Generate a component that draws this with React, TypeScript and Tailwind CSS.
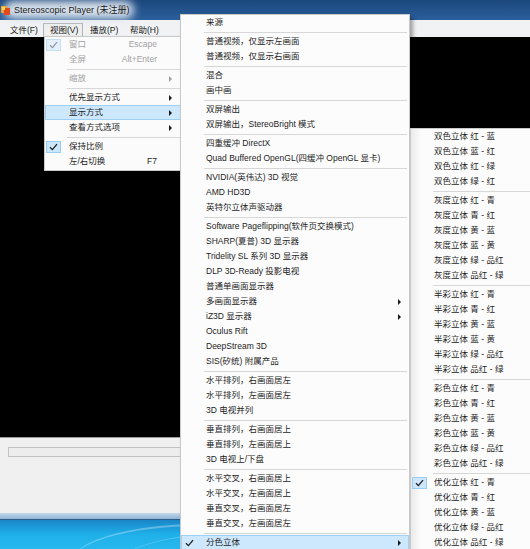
import React from 'react';

type Item = { t: string; k?: string; sub?: boolean; chk?: boolean; dis?: boolean; act?: boolean } | null;

const menu1: Item[] = [
  { t: '窗口', k: 'Escape', chk: true, dis: true },
  { t: '全屏', k: 'Alt+Enter', dis: true },
  null,
  { t: '缩放', sub: true, dis: true },
  null,
  { t: '优先显示方式', sub: true },
  { t: '显示方式', sub: true, act: true },
  { t: '查看方式选项', sub: true },
  null,
  { t: '保持比例', chk: true },
  { t: '左/右切换', k: 'F7' },
];

const menu2: Item[] = [
  { t: '来源' },
  null,
  { t: '普通视频，仅显示左画面' },
  { t: '普通视频，仅显示右画面' },
  null,
  { t: '混合' },
  { t: '画中画' },
  null,
  { t: '双屏输出' },
  { t: '双屏输出，StereoBright 模式' },
  null,
  { t: '四重缓冲 DirectX' },
  { t: 'Quad Buffered OpenGL(四缓冲 OpenGL 显卡)' },
  null,
  { t: 'NVIDIA(英伟达) 3D 视觉' },
  { t: 'AMD HD3D' },
  { t: '英特尔立体声驱动器' },
  null,
  { t: 'Software Pageflipping(软件页交换模式)' },
  { t: 'SHARP(夏普) 3D 显示器' },
  { t: 'Tridelity SL 系列 3D 显示器' },
  { t: 'DLP 3D-Ready 投影电视' },
  { t: '普通单画面显示器' },
  { t: '多画面显示器', sub: true },
  { t: 'iZ3D 显示器', sub: true },
  { t: 'Oculus Rift' },
  { t: 'DeepStream 3D' },
  { t: 'SIS(矽统) 附属产品' },
  null,
  { t: '水平排列，右画面居左' },
  { t: '水平排列，左画面居左' },
  { t: '3D 电视并列' },
  null,
  { t: '垂直排列，右画面居上' },
  { t: '垂直排列，左画面居上' },
  { t: '3D 电视上/下盘' },
  null,
  { t: '水平交叉，右画面居上' },
  { t: '水平交叉，左画面居上' },
  { t: '垂直交叉，右画面居左' },
  { t: '垂直交叉，左画面居左' },
  null,
  { t: '分色立体', sub: true, chk: true, act: true },
];

const menu3: Item[] = [
  { t: '双色立体 红 - 蓝' },
  { t: '双色立体 蓝 - 红' },
  { t: '双色立体 红 - 绿' },
  { t: '双色立体 绿 - 红' },
  null,
  { t: '灰度立体 红 - 青' },
  { t: '灰度立体 青 - 红' },
  { t: '灰度立体 黄 - 蓝' },
  { t: '灰度立体 蓝 - 黄' },
  { t: '灰度立体 绿 - 品红' },
  { t: '灰度立体 品红 - 绿' },
  null,
  { t: '半彩立体 红 - 青' },
  { t: '半彩立体 青 - 红' },
  { t: '半彩立体 黄 - 蓝' },
  { t: '半彩立体 蓝 - 黄' },
  { t: '半彩立体 绿 - 品红' },
  { t: '半彩立体 品红 - 绿' },
  null,
  { t: '彩色立体 红 - 青' },
  { t: '彩色立体 青 - 红' },
  { t: '彩色立体 黄 - 蓝' },
  { t: '彩色立体 蓝 - 黄' },
  { t: '彩色立体 绿 - 品红' },
  { t: '彩色立体 品红 - 绿' },
  null,
  { t: '优化立体 红 - 青', chk: true },
  { t: '优化立体 青 - 红' },
  { t: '优化立体 黄 - 蓝' },
  { t: '优化立体 绿 - 品红' },
  { t: '优化立体 品红 - 绿' },
];

const Check = ({ dis }: { dis?: boolean }) => (
  <svg width="9" height="8" viewBox="0 0 9 8">
    <path d="M1 4.3 L3.4 6.6 L8 1.2" fill="none" stroke={dis ? '#8d9aa6' : '#1f1f1f'} strokeWidth="1.3" />
  </svg>
);

const Arrow = ({ dis }: { dis?: boolean }) => (
  <svg width="3" height="6" viewBox="0 0 3 6">
    <path d="M0 0 L3 3 L0 6Z" fill={dis ? '#a0a0a0' : '#1a1a1a'} />
  </svg>
);

function MenuRow({ it, v }: { it: Item; v: 1 | 2 | 3 }) {
  if (!it) {
    return (
      <div className={`flex h-[4px] items-center pr-[2px] ${v === 2 ? 'pl-[23px]' : 'pl-[22px]'}`}>
        <div className="h-px flex-1 bg-[#d7d7d7]" />
      </div>
    );
  }
  const pl = v === 1 ? 'pl-[24px]' : v === 2 ? 'pl-[25px]' : 'pl-[23px]';
  return (
    <div
      className={`relative flex h-[15px] items-center ${pl} ${
        it.act ? 'bg-[#cde8fc] shadow-[inset_0_0_0_1px_#9fd0f5]' : ''
      } ${it.dis ? 'text-[#a2a2a2]' : 'text-[#1c1c1c]'}`}
    >
      {it.chk && (
        <div
          className={`absolute left-[1px] top-[2px] flex h-[12px] w-[15px] items-center justify-center ${
            it.act ? '' : it.dis ? 'border border-[#c4def2] bg-[#e3f0fb]' : 'border border-[#99cdf3] bg-[#cce6fb]'
          }`}
        >
          <Check dis={it.dis} />
        </div>
      )}
      <span className="flex-1 whitespace-nowrap">{it.t}</span>
      {it.k && <span className="mr-[25px] whitespace-nowrap">{it.k}</span>}
      {it.sub && (
        <span className={`absolute top-[5px] flex ${v === 1 ? 'right-[10px]' : 'right-[8px]'}`}>
          <Arrow dis={it.dis} />
        </span>
      )}
    </div>
  );
}

const font = "font-['Liberation_Sans','Noto_Sans_CJK_SC',sans-serif]";

export default function App() {
  return (
    <div className={`relative h-[549px] w-[530px] overflow-hidden ${font} text-[8.5px] leading-none`}>
      <div className="flex h-full flex-col">
        {/* Title bar */}
        <div className="relative flex h-[20px] items-center bg-gradient-to-b from-[#1b477c] to-[#2b5f9c]">
          <div className="absolute left-[4px] top-[1px] h-[18px] w-[130px] rounded-[9px] bg-[#d9e2ec] blur-[4px]" />
          <div className="relative ml-[1px] h-[10px] w-[9px]">
            <div className="absolute left-0 top-[1px] h-[7px] w-[6px] bg-[#f0a030]" />
            <div className="absolute left-[3px] top-[3px] h-[7px] w-[6px] bg-[#e04a1c]" />
            <div className="absolute left-[1px] top-[2px] h-[3px] w-[3px] bg-[#ffd860]" />
          </div>
          <span className="relative ml-[4px] text-[9px] text-[#1a1a1a]">Stereoscopic Player (未注册)</span>
        </div>
        {/* Menu bar */}
        <div className="flex h-[17px] bg-[#f1f2f4] pl-[3px] text-[#1a1a1a]">
          <div className="mt-[3px] flex h-[14px] w-[40px] items-center pl-[7px]">文件(F)</div>
          <div className="mt-[3px] flex h-[14px] w-[40px] items-center border border-b-0 border-[#b3b3b3] bg-[#efefef] pl-[6px]">视图(V)</div>
          <div className="mt-[3px] flex h-[14px] w-[40px] items-center pl-[7px]">播放(P)</div>
          <div className="mt-[3px] flex h-[14px] w-[40px] items-center pl-[7px]">帮助(H)</div>
        </div>
        {/* Video */}
        <div className="h-[400px] bg-black" />
        {/* Status area */}
        <div className="flex h-[76px] flex-col border-t border-[#9c9c9c] bg-[#f0f0f0]">
          <div className="mx-[8px] mt-[9px] h-[10px] border border-[#c3c3c3] bg-[#ededed]" />
        </div>
        {/* Frame bottom */}
        <div className="h-[7px] border-b border-[#2f5f88] bg-gradient-to-b from-[#c4d8ea] to-[#8fb3d4]" />
        {/* Desktop */}
        <div className="relative h-[29px] overflow-hidden bg-gradient-to-b from-[#1a86c8] via-[#1fb0ea] to-[#27b8ef]">
          <div className="absolute left-[70px] top-[4px] h-[80px] w-[260px] rounded-[50%] border-t-2 border-white/30" />
          <div className="absolute left-[110px] top-[12px] h-[80px] w-[260px] rounded-[50%] border-t border-white/25" />
        </div>
      </div>

      {/* Menu 1 */}
      <div className="absolute left-[44px] top-[36px] w-[139px] border border-[#c9c9c9] bg-[#fbfbfb] pb-[1px] shadow-[2px_2px_3px_rgba(0,0,0,0.3)]">
        {menu1.map((it, i) => (
          <MenuRow key={i} it={it} v={1} />
        ))}
      </div>

      {/* Menu 2 */}
      <div className="absolute left-[180px] top-[14px] w-[230px] border border-[#c9c9c9] bg-[#fcfcfc] shadow-[3px_3px_4px_rgba(0,0,0,0.35)]">
        {menu2.map((it, i) => (
          <MenuRow key={i} it={it} v={2} />
        ))}
      </div>

      {/* Menu 3 */}
      <div className="absolute left-[410px] top-[128px] w-[140px] border border-[#c9c9c9] bg-[#fcfcfc]">
        <div className="pointer-events-none absolute bottom-0 left-0 top-0 w-[10px] bg-gradient-to-r from-[rgba(0,0,0,0.07)] to-transparent" />
        {menu3.map((it, i) => (
          <MenuRow key={i} it={it} v={3} />
        ))}
      </div>
    </div>
  );
}
